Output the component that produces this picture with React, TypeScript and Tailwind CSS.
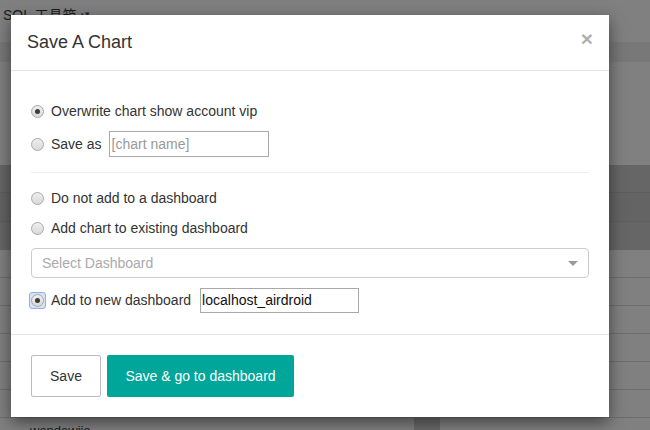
import React from "react";

function Radio({ checked = false, focused = false }: { checked?: boolean; focused?: boolean }) {
  const circle = (
    <span className="flex h-[13px] w-[13px] items-center justify-center rounded-full border border-[#a9a9a9] bg-gradient-to-b from-[#eeeeee] to-[#d9d9d9]">
      {checked && <span className="h-[5px] w-[5px] rounded-full bg-[#3c3c3c]" />}
    </span>
  );
  if (focused) {
    return (
      <span className="-ml-[2px] mr-[5px] flex h-[17px] w-[17px] items-center justify-center rounded-[3px] border border-[#8fb0e6] bg-[#d4e3f8]">
        {circle}
      </span>
    );
  }
  return <span className="mr-[7px] flex">{circle}</span>;
}

export default function App() {
  const font = { fontFamily: '"Liberation Sans", Arial, sans-serif' };
  return (
    <div className="relative h-[430px] w-[650px] overflow-hidden bg-[#808080]" style={font}>
      {/* background page (dimmed) */}
      <div className="flex h-full flex-col">
        <div className="flex h-[42px] items-start px-[3px] pt-[5px] text-[14px] text-[#1c1c1c]">
          <span style={{ fontFamily: '"Liberation Sans", "Noto Sans CJK SC", sans-serif' }}>SQL 工具箱</span>
          <span className="ml-1 text-[9px] leading-[18px] text-[#2a2a2a]">▴▾</span>
        </div>
        <div className="h-[20px] bg-[#787878]" />
        <div className="h-[103px]" />
        <div className="flex flex-col">
          <div className="h-[28px] border-b border-[#5e5e5e] bg-[#666666]" />
          <div className="h-[29px] border-b border-[#5e5e5e] bg-[#646464]" />
          <div className="h-[28px] bg-[#666666]" />
        </div>
        <div className="flex flex-col">
          <div className="h-[28px] border-b border-[#6e6e6e]" />
          <div className="h-[28px] border-b border-[#6e6e6e]" />
          <div className="h-[28px] border-b border-[#6e6e6e]" />
          <div className="h-[28px] border-b border-[#6e6e6e]" />
          <div className="h-[28px] border-b border-[#6e6e6e]" />
          <div className="h-[28px] border-b border-[#6e6e6e]" />
          <div className="flex h-[12px]">
            <span className="pl-[30px] pt-[6px] text-[13px] leading-[13px] text-[#1c1c1c]">wendewjie</span>
            <span className="ml-auto mr-[210px] w-[26px] bg-[#6a6a6a]" />
          </div>
        </div>
      </div>

      {/* modal */}
      <div className="absolute left-[11px] top-[15px] flex h-[402px] w-[598px] flex-col bg-white shadow-[0_5px_15px_rgba(0,0,0,0.5)]">
        <div className="flex h-[56px] items-center justify-between border-b border-[#e5e5e5] pl-[16px] pr-[16px]">
          <span className="text-[18px] text-[#333333]">Save A Chart</span>
          <span className="-mt-[8px] text-[21px] font-bold leading-none text-[#b0b0b0]">×</span>
        </div>

        <div className="flex flex-col px-[20px] pb-[21px] pt-[30px] text-[14px] text-[#333333]">
          <div className="flex h-[20px] items-center">
            <Radio checked />
            <span>Overwrite chart show account vip</span>
          </div>
          <div className="mt-[10px] flex h-[26px] items-center">
            <Radio />
            <span>Save as</span>
            <span className="ml-[7px] flex h-[26px] w-[160px] items-center border border-[#a9a9a9] pl-[2px] text-[#999999]">
              [chart name]
            </span>
          </div>
          <div className="mt-[15px] h-px bg-[#eeeeee]" />
          <div className="mt-[15px] flex h-[20px] items-center">
            <Radio />
            <span>Do not add to a dashboard</span>
          </div>
          <div className="mt-[10px] flex h-[20px] items-center">
            <Radio />
            <span>Add chart to existing dashboard</span>
          </div>
          <div className="mt-[10px] flex h-[30px] items-center justify-between rounded-[4px] border border-[#cccccc] pl-[10px] pr-[10px]">
            <span className="text-[#aaaaaa]">Select Dashboard</span>
            <span className="h-0 w-0 border-l-[5px] border-r-[5px] border-t-[5px] border-l-transparent border-r-transparent border-t-[#999999]" />
          </div>
          <div className="mt-[10px] flex h-[25px] items-center">
            <Radio checked focused />
            <span>Add to new dashboard</span>
            <span className="ml-[9px] flex h-[25px] w-[159px] items-center border border-[#a9a9a9] pl-[1px] text-[#111111]">
              localhost_airdroid
            </span>
          </div>
        </div>

        <div className="flex gap-[6px] border-t border-[#e5e5e5] px-[20px] pb-[20px] pt-[20px]">
          <button className="h-[42px] w-[70px] rounded-[2px] border border-[#bbbbbb] bg-white text-[14px] text-[#333333]">
            Save
          </button>
          <button className="h-[42px] w-[187px] rounded-[2px] bg-[#00a699] text-[14px] text-white">
            Save &amp; go to dashboard
          </button>
        </div>
      </div>
    </div>
  );
}
